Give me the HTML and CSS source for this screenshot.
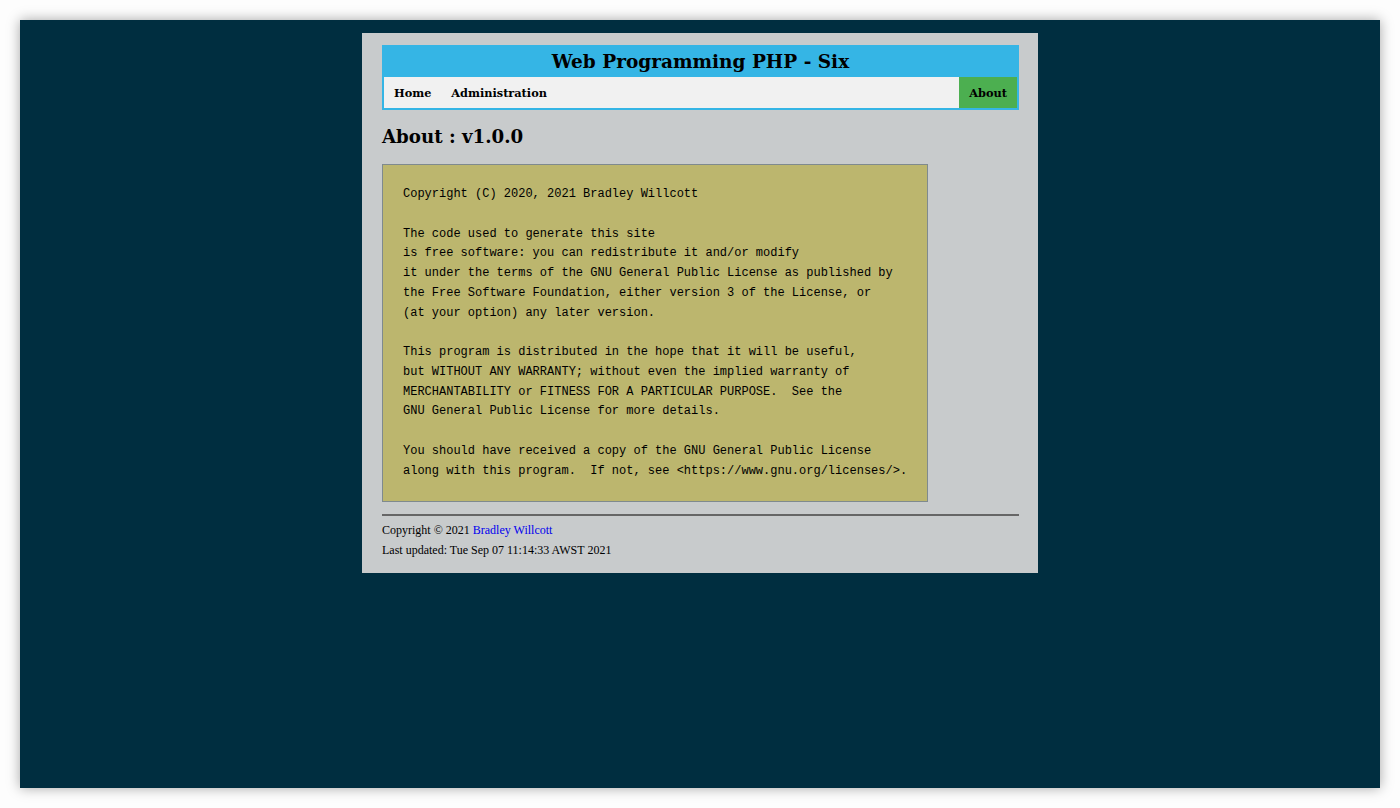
FILE: index.html
```html
<!DOCTYPE html>
<html lang="en">
<head>
<meta charset="utf-8">
<title>About</title>
<link rel="stylesheet" href="styles.css">
</head>
<body>
<div class="page">
  <div class="header">
    <h1 class="title">Web Programming PHP - Six</h1>
    <nav class="nav">
      <a class="nav-item" href="#">Home</a>
      <a class="nav-item" href="#">Administration</a>
      <span class="nav-spacer"></span>
      <a class="nav-item active" href="#">About</a>
    </nav>
  </div>
  <h2 class="heading">About : v1.0.0</h2>
  <pre class="license">Copyright (C) 2020, 2021 Bradley Willcott

The code used to generate this site
is free software: you can redistribute it and/or modify
it under the terms of the GNU General Public License as published by
the Free Software Foundation, either version 3 of the License, or
(at your option) any later version.

This program is distributed in the hope that it will be useful,
but WITHOUT ANY WARRANTY; without even the implied warranty of
MERCHANTABILITY or FITNESS FOR A PARTICULAR PURPOSE.  See the
GNU General Public License for more details.

You should have received a copy of the GNU General Public License
along with this program.  If not, see &lt;https://www.gnu.org/licenses/&gt;.</pre>
  <hr class="rule">
  <div class="footer">
    <div class="footer-line">Copyright © 2021 <a class="footer-link" href="#">Bradley Willcott</a></div>
    <div class="footer-line">Last updated: Tue Sep 07 11:14:33 AWST 2021</div>
  </div>
</div>
</body>
</html>
```

FILE: styles.css
```css
html {
  background: #fdfdfd;
  height: 100%;
}
body {
  margin: 20px;
  height: 768px;
  background: #002e40;
  box-shadow: 0 0 12px rgba(0, 0, 0, 0.35);
  font-family: "DejaVu Serif", "Liberation Serif", serif;
  overflow: hidden;
}
.page {
  width: 637px;
  margin: 13px auto 0;
  padding: 12px 19px 0 20px;
  background: #c8cbcc;
  height: 528px;
}
.header {
  border: 2px solid #35b5e5;
  border-top: 0;
  background: #f1f1f1;
}
.title {
  background: #35b5e5;
  height: 31px;
  padding-top: 1px;
  line-height: 32px;
  text-align: center;
  font-size: 18.5px;
  font-weight: bold;
  color: #000;
  margin: 0 -2px;
}
.nav {
  display: flex;
  height: 31px;
  align-items: stretch;
}
.nav-item {
  display: flex;
  align-items: center;
  padding: 0 10px;
  font-size: 11.3px;
  font-weight: bold;
  color: #000;
  text-decoration: none;
}
.nav-spacer {
  flex: 1;
}
.nav-item.active {
  background: #4caf50;
}
.heading {
  margin: 15px 0 15px;
  font-size: 18.2px;
  font-weight: bold;
  color: #000;
  line-height: 24px;
}
.license {
  margin: 0;
  width: 504px;
  padding: 20px;
  background: #bcb66e;
  border: 1px solid #7f8a8e;
  font-family: "Liberation Mono", monospace;
  font-size: 12px;
  line-height: 19.75px;
  color: #000;
}
.rule {
  margin: 12px 0 0;
  border: 0;
  border-top: 2px solid #666;
  height: 0;
}
.footer {
  padding-top: 4px;
  font-family: "Liberation Serif", serif;
  font-size: 12px;
  color: #000;
}
.footer-line {
  line-height: 20px;
}
.footer-link {
  color: #0000ee;
  text-decoration: none;
}
```
